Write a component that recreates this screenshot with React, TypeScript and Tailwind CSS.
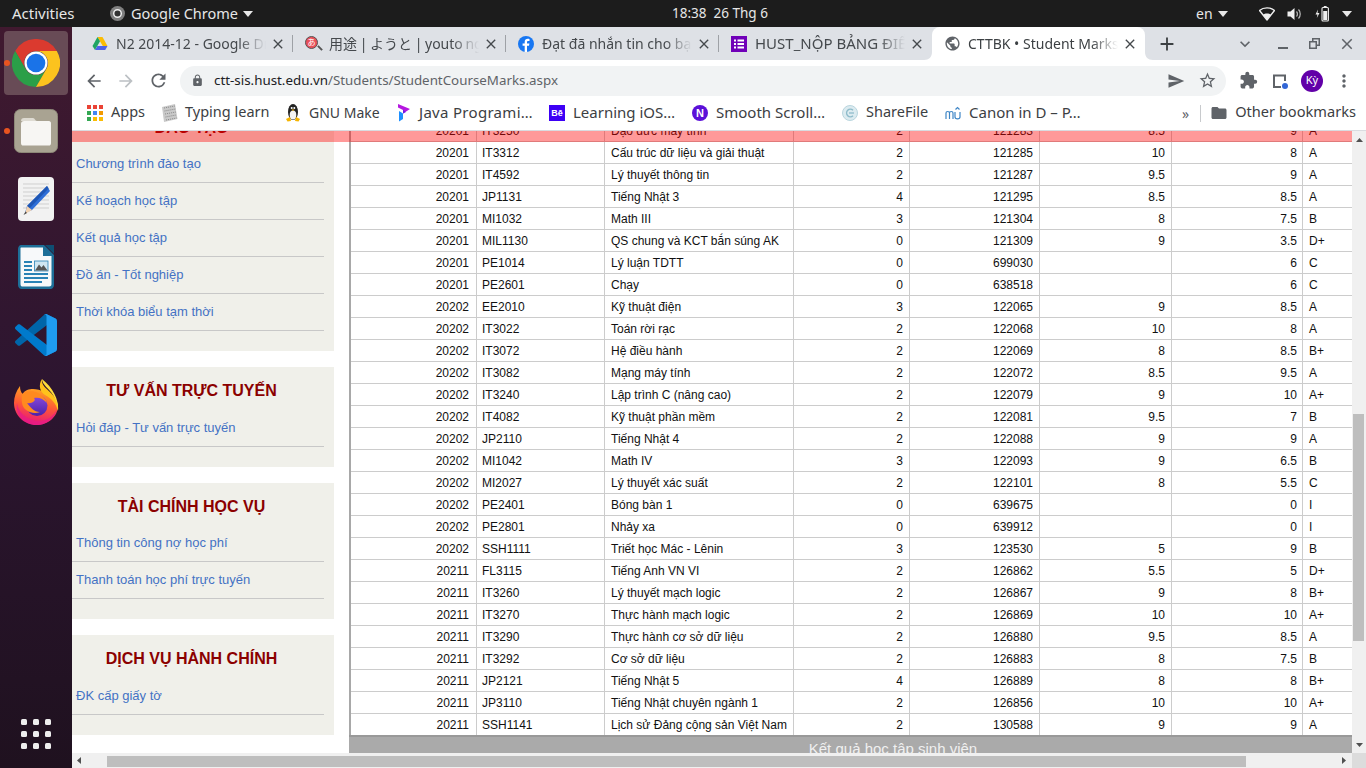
import React from "react";
import { MdArrowBack, MdArrowForward, MdRefresh, MdClose, MdAdd, MdExpandMore, MdMoreVert, MdLock, MdSend, MdStarBorder, MdExtension, MdFolder, MdPublic } from "react-icons/md";

const rows: string[][] = [
  ["20201", "IT3250", "Đạo đức máy tính", "2", "121283", "8.5", "9", "A"],
  ["20201", "IT3312", "Cấu trúc dữ liệu và giải thuật", "2", "121285", "10", "8", "A"],
  ["20201", "IT4592", "Lý thuyết thông tin", "2", "121287", "9.5", "9", "A"],
  ["20201", "JP1131", "Tiếng Nhật 3", "4", "121295", "8.5", "8.5", "A"],
  ["20201", "MI1032", "Math III", "3", "121304", "8", "7.5", "B"],
  ["20201", "MIL1130", "QS chung và KCT bắn súng AK", "0", "121309", "9", "3.5", "D+"],
  ["20201", "PE1014", "Lý luận TDTT", "0", "699030", "", "6", "C"],
  ["20201", "PE2601", "Chạy", "0", "638518", "", "6", "C"],
  ["20202", "EE2010", "Kỹ thuật điện", "3", "122065", "9", "8.5", "A"],
  ["20202", "IT3022", "Toán rời rạc", "2", "122068", "10", "8", "A"],
  ["20202", "IT3072", "Hệ điều hành", "2", "122069", "8", "8.5", "B+"],
  ["20202", "IT3082", "Mạng máy tính", "2", "122072", "8.5", "9.5", "A"],
  ["20202", "IT3240", "Lập trình C (nâng cao)", "2", "122079", "9", "10", "A+"],
  ["20202", "IT4082", "Kỹ thuật phần mềm", "2", "122081", "9.5", "7", "B"],
  ["20202", "JP2110", "Tiếng Nhật 4", "2", "122088", "9", "9", "A"],
  ["20202", "MI1042", "Math IV", "3", "122093", "9", "6.5", "B"],
  ["20202", "MI2027", "Lý thuyết xác suất", "2", "122101", "8", "5.5", "C"],
  ["20202", "PE2401", "Bóng bàn 1", "0", "639675", "", "0", "I"],
  ["20202", "PE2801", "Nhảy xa", "0", "639912", "", "0", "I"],
  ["20202", "SSH1111", "Triết học Mác - Lênin", "3", "123530", "5", "9", "B"],
  ["20211", "FL3115", "Tiếng Anh VN VI", "2", "126862", "5.5", "5", "D+"],
  ["20211", "IT3260", "Lý thuyết mạch logic", "2", "126867", "9", "8", "B+"],
  ["20211", "IT3270", "Thực hành mạch logic", "2", "126869", "10", "10", "A+"],
  ["20211", "IT3290", "Thực hành cơ sở dữ liệu", "2", "126880", "9.5", "8.5", "A"],
  ["20211", "IT3292", "Cơ sở dữ liệu", "2", "126883", "8", "7.5", "B"],
  ["20211", "JP2121", "Tiếng Nhật 5", "4", "126889", "8", "8", "B+"],
  ["20211", "JP3110", "Tiếng Nhật chuyên ngành 1", "2", "126856", "10", "10", "A+"],
  ["20211", "SSH1141", "Lịch sử Đảng cộng sản Việt Nam", "2", "130588", "9", "9", "A"],
];

const colWidths = [126, 128, 189, 116, 130, 132, 131, 49];

function ChromeLogo({ size }: { size: number }) {
  return (
    <svg width={size} height={size} viewBox="0 0 48 48">
      <path d="M3.2 12A24 24 0 0 1 44.8 12L24 12A12 12 0 0 0 13.6 30Z" fill="#db3a2f" />
      <path d="M3.2 12L13.6 30A12 12 0 0 0 34.4 30L24 48A24 24 0 0 1 3.2 12Z" fill="#2b9f48" />
      <path d="M44.8 12L24 12A12 12 0 0 1 34.4 30L24 48A24 24 0 0 0 44.8 12Z" fill="#fcc31e" />
      <circle cx="24" cy="24" r="11.5" fill="#fff" />
      <circle cx="24" cy="24" r="9.3" fill="#1a73e8" />
    </svg>
  );
}

function DriveIcon() {
  return (
    <svg width="16" height="15" viewBox="0 0 16 15">
      <path d="M5.5 1H10.5L15.5 10H10.8Z" fill="#fbbc04" />
      <path d="M5.5 1L0.5 10L3 14L8 5.2Z" fill="#1fa463" />
      <path d="M3 14H13.2L15.5 10H5.4Z" fill="#4d62e8" />
    </svg>
  );
}

function JishoIcon() {
  return (
    <span className="relative flex h-[16px] w-[16px]">
      <span className="flex h-[13px] w-[13px] items-center justify-center rounded-full border border-[#555] bg-[#e9505a] text-[8px] leading-none text-white font-['Noto_Sans_CJK_JP',sans-serif]">
        あ
      </span>
      <span className="absolute bottom-[1px] right-0 h-[6px] w-[2px] -rotate-45 bg-[#555]" />
    </span>
  );
}

function FbIcon() {
  return (
    <svg width="16" height="16" viewBox="0 0 16 16">
      <circle cx="8" cy="8" r="8" fill="#1877f2" />
      <path d="M9 16V9.8H11L11.4 7.5H9V6.2C9 5.5 9.4 5 10.2 5H11.5V3C11 2.9 10.4 2.8 9.8 2.8C7.9 2.8 6.7 4 6.7 5.9V7.5H4.6V9.8H6.7V16Z" fill="#fff" />
    </svg>
  );
}

function FormsIcon() {
  return (
    <svg width="16" height="16" viewBox="0 0 16 16">
      <rect width="16" height="16" fill="#7000b8" />
      <g fill="#fff">
        <rect x="3" y="3.5" width="2" height="2" />
        <rect x="6.5" y="3.5" width="6.5" height="2" />
        <rect x="3" y="7" width="2" height="2" />
        <rect x="6.5" y="7" width="6.5" height="2" />
        <rect x="3" y="10.5" width="2" height="2" />
        <rect x="6.5" y="10.5" width="6.5" height="2" />
      </g>
    </svg>
  );
}

function AppsIcon() {
  const colors = ["#ea4335", "#ea4335", "#ea4335", "#34a853", "#4285f4", "#f29900", "#34a853", "#fbbc04", "#fbbc04"];
  return (
    <span className="grid grid-cols-[4px_4px_4px] grid-rows-[4px_4px_4px] gap-[2px]">
      {colors.map((c, i) => (
        <svg key={i} width="4" height="4" viewBox="0 0 4 4">
          <rect width="4" height="4" fill={c} />
        </svg>
      ))}
    </span>
  );
}

function TypingIcon() {
  return (
    <svg width="17" height="18" viewBox="0 0 17 18">
      <path d="M1 3L14 0L16.5 15L3 18Z" fill="#c9c9c9" />
      <g stroke="#777" strokeWidth="0.8" strokeDasharray="1 1">
        <path d="M3 4L14 2" />
        <path d="M3.5 7L14.5 5" />
        <path d="M4 10L15 8" />
        <path d="M4.5 13L15 11" />
        <path d="M5 16L15.5 14" />
      </g>
    </svg>
  );
}

function TuxIcon() {
  return (
    <svg width="16" height="18" viewBox="0 0 16 18">
      <ellipse cx="8" cy="8" rx="5" ry="8" fill="#222" />
      <ellipse cx="8" cy="11" rx="3.3" ry="4.6" fill="#f4f4f4" />
      <circle cx="6.7" cy="4" r="1" fill="#fff" />
      <circle cx="9.3" cy="4" r="1" fill="#fff" />
      <path d="M6.5 5.4H9.5L8 7Z" fill="#f5b400" />
      <path d="M1 15L5 13L6 17L2.5 17.6Z" fill="#f5b400" />
      <path d="M15 15L11 13L10 17L13.5 17.6Z" fill="#f5b400" />
    </svg>
  );
}

function JavaIcon() {
  return (
    <svg width="14" height="18" viewBox="0 0 14 18">
      <path d="M1 0L13 5L6 9.5L6 6L1 3.5Z" fill="#b517e0" />
      <path d="M2 7L6 9.5L6 15L2 17.5Z" fill="#1e90ff" />
      <path d="M6 6L9 8L6 9.5Z" fill="#6a1be0" />
    </svg>
  );
}

function BeIcon() {
  return (
    <span className="flex h-[16px] w-[16px] items-center justify-center bg-[#3d00f5] font-['Liberation_Sans',sans-serif] text-[9px] font-bold leading-none text-white">
      Bē
    </span>
  );
}

function NIcon() {
  return (
    <span className="flex h-[16px] w-[16px] items-center justify-center rounded-full bg-[#5b10d8] font-['Liberation_Sans',sans-serif] text-[11px] font-bold leading-none text-white">
      N
    </span>
  );
}

function ShareIcon() {
  return (
    <svg width="16" height="16" viewBox="0 0 16 16">
      <circle cx="8" cy="8" r="7.5" fill="#dcebf0" stroke="#b9d5de" />
      <path d="M11 5.2A3.8 3.8 0 1 0 11 10.8" fill="none" stroke="#8fbccb" strokeWidth="1.5" />
      <path d="M7 8H12" stroke="#8fbccb" strokeWidth="1.3" />
    </svg>
  );
}

function CanonIcon() {
  return (
    <svg width="16" height="14" viewBox="0 0 16 14">
      <path d="M1 13V7C1 5 4.5 5 4.5 7V13M4.5 7C4.5 5 8 5 8 7V13" fill="none" stroke="#3f86c6" strokeWidth="1.2" />
      <path d="M10 6V11C10 13.5 15 13.5 15 11V6" fill="none" stroke="#3f86c6" strokeWidth="1.2" />
      <path d="M10.5 3.5L12.5 1.5L14.5 3.5" fill="none" stroke="#3f86c6" strokeWidth="1.2" />
    </svg>
  );
}

function FilesIcon() {
  return (
    <svg width="44" height="44" viewBox="0 0 44 44">
      <rect x="0.5" y="0.5" width="43" height="43" rx="6" fill="#a9a392" stroke="#8d8878" />
      <path d="M7 12C7 10 8 9 10 9H19C21 9 21 12 23 12H7Z" fill="#dedbd2" />
      <path d="M7 15C7 13 8 12 10 12H35C36 12 37 13 37 14V34C37 36 36 36.5 35 36.5H9C8 36.5 7 36 7 34Z" fill="#f7f6f3" />
    </svg>
  );
}

function EditorIcon() {
  return (
    <svg width="36" height="44" viewBox="0 0 36 44">
      <rect width="36" height="44" rx="4" fill="#f2f2f2" />
      <g stroke="#cfcfcf" strokeWidth="1">
        <path d="M5 7H31M5 11H31M5 15H31M5 19H31M5 23H31M5 27H31M5 31H31" />
      </g>
      <path d="M29 9L32 14L14 33L7 36L9 29Z" fill="#2f6fd8" />
      <path d="M29 9L30.5 11.5L11 32L9 29Z" fill="#1f57b5" />
      <path d="M9 29L14 33L7 37Z" fill="#f2d2b0" />
      <path d="M7.6 34.5L9 36L5.5 38Z" fill="#444" />
    </svg>
  );
}

function WriterIcon() {
  return (
    <svg width="36" height="44" viewBox="0 0 36 44">
      <path d="M3 0H26L36 10V40C36 42 34.5 44 32.5 44H3.5C1.5 44 0 42 0 40V4C0 2 1.5 0 3 0Z" fill="#1d6f98" />
      <path d="M3 2.5H25V11H33.5V39C33.5 40.5 33 41.5 31 41.5H4C3 41.5 2.5 40.5 2.5 39V3Z" fill="#f7f9fa" />
      <path d="M27 0L36 9V0Z" fill="#0e4f73" />
      <g fill="#2a83b6">
        <rect x="6" y="16" width="8" height="2" />
        <rect x="6" y="20" width="8" height="2" />
        <rect x="6" y="24" width="8" height="2" />
        <rect x="6" y="28" width="24" height="2" />
        <rect x="6" y="32" width="24" height="2" />
        <rect x="6" y="36" width="18" height="2" />
      </g>
      <rect x="16.5" y="16" width="13.5" height="10" fill="#cfe6f2" stroke="#2a83b6" strokeWidth="0.8" />
      <path d="M17 25.5L21 19.5L23.5 22.5L25.5 20L29.5 25.5Z" fill="#555" />
    </svg>
  );
}

function VSCodeIcon() {
  return (
    <svg width="42" height="42" viewBox="0 0 100 100">
      <path d="M96.4614 10.7962L75.8569 0.875542C73.4719 -0.272773 70.6217 0.211611 68.75 2.08333L1.29858 63.5832C-0.515693 65.2373 -0.513607 68.0937 1.30308 69.7452L6.81272 74.754C8.29793 76.1042 10.5347 76.2036 12.1338 74.9905L93.3609 13.3699C96.086 11.3026 100 13.2462 100 16.6667V16.4275C100 14.0265 98.6246 11.8378 96.4614 10.7962Z" fill="#0065a9" />
      <path d="M96.4614 89.2038L75.8569 99.1245C73.4719 100.273 70.6217 99.7884 68.75 97.9167L1.29858 36.4169C-0.515693 34.7627 -0.513607 31.9063 1.30308 30.2548L6.81272 25.246C8.29793 23.8958 10.5347 23.7964 12.1338 25.0095L93.3609 86.6301C96.086 88.6974 100 86.7538 100 83.3334V83.5726C100 85.9735 98.6246 88.1622 96.4614 89.2038Z" fill="#007acc" />
      <path d="M75.8578 99.1263C73.4721 100.274 70.6219 99.7885 68.75 97.9166C71.0564 100.223 75 98.5895 75 95.3278V4.67213C75 1.41039 71.0564 -0.223106 68.75 2.08329C70.6219 0.211402 73.4721 -0.273666 75.8578 0.873633L96.4587 10.7807C98.6234 11.8217 100 14.0112 100 16.4132V83.5871C100 85.9891 98.6234 88.1786 96.4586 89.2196L75.8578 99.1263Z" fill="#1f9cf0" />
    </svg>
  );
}

function FirefoxIcon() {
  return (
    <svg width="46" height="46" viewBox="0 0 46 46">
      <defs>
        <linearGradient id="ffbody" x1="0.6" y1="0" x2="0.4" y2="1">
          <stop offset="0" stopColor="#ffb11f" />
          <stop offset="0.5" stopColor="#ff5a35" />
          <stop offset="1" stopColor="#e5127f" />
        </linearGradient>
        <linearGradient id="ffpurple" x1="0.5" y1="0" x2="0.5" y2="1">
          <stop offset="0" stopColor="#8c4be0" />
          <stop offset="1" stopColor="#4a22a8" />
        </linearGradient>
      </defs>
      <path d="M1 24C1 18 3 12 7 7C7 11 8 13 9.5 15C12 11 16 10 20 10C26 10 40 14 45 26C45 38 35 46 23.5 46C11 46 1 36 1 24Z" fill="url(#ffbody)" />
      <path d="M29 0C28 6 33 9 38 14C43 19 46 25 45 32C43 24 38 19 32 16C27 13 25 6 29 0Z" fill="#ffc21c" />
      <path d="M29 0C29 6 36 9 40 16C43 21 45 26 45 32C46 20 40 9 29 0Z" fill="#ffdc3c" />
      <circle cx="24" cy="26.5" r="10.5" fill="url(#ffpurple)" />
      <path d="M9 15C13 12 20 11 25 14C30 17 33 20 34 24C30 19 25 18 21 19C24 22 18 25 14 24C17 28 21 33 27 33C20 36 10 32 9 24C8.5 20 8.5 17 9 15Z" fill="#ff8a1f" />
      <path d="M4 24C5 34 15 42 26 42C34 42 41 37 44 30C42 40 33 46 23.5 46C12 46 2 36 4 24Z" fill="#e71c86" opacity="0.75" />
    </svg>
  );
}

function WifiIcon() {
  return (
    <svg width="16" height="14" viewBox="0 0 16 14">
      <path d="M0.5 3.5C4.5 0 11.5 0 15.5 3.5L8 13Z" fill="none" stroke="#eee" strokeWidth="1.4" strokeLinejoin="round" />
      <path d="M4 7.5C6 6 10 6 12 7.5L8 13Z" fill="#eee" />
    </svg>
  );
}

function VolumeIcon() {
  return (
    <svg width="15" height="14" viewBox="0 0 15 14">
      <path d="M0.5 4.5H3.5L7.5 1V13L3.5 9.5H0.5Z" fill="#eee" />
      <path d="M9.5 4.5C10.7 5.7 10.7 8.3 9.5 9.5M11.5 2.5C13.8 4.8 13.8 9.2 11.5 11.5" fill="none" stroke="#bbb" strokeWidth="1.2" />
    </svg>
  );
}

function BatteryIcon() {
  return (
    <svg width="14" height="16" viewBox="0 0 14 16">
      <path d="M3 3.5L0.5 8.5H2.5L1.8 12L4.5 7H2.5Z" fill="#eee" />
      <rect x="7" y="1.5" width="6.4" height="13.5" rx="1" fill="none" stroke="#eee" strokeWidth="1.1" />
      <rect x="8.8" y="0" width="2.8" height="1.6" fill="#eee" />
      <rect x="8.2" y="5" width="4" height="9" fill="#eee" />
    </svg>
  );
}

function Caret({ className }: { className?: string }) {
  return (
    <svg className={className} width="10" height="6" viewBox="0 0 10 6">
      <path d="M0 0H10L5 6Z" fill="#e8e8e8" />
    </svg>
  );
}

function Tab({ icon, title, active, sep, className, textSize }: { icon: React.ReactNode; title: string; active?: boolean; sep?: boolean; className?: string; textSize?: string }) {
  return (
    <div className={"relative flex h-[33px] w-[213px] shrink-0 items-center " + (active ? "rounded-t-[8px] bg-white " : "") + (className ?? "")}>
      <span className="flex w-[36px] shrink-0 justify-start pl-[12px]">{icon}</span>
      <span className={"w-[150px] shrink-0 overflow-hidden whitespace-nowrap [mask-image:linear-gradient(to_right,black_82%,transparent)] " + (textSize ?? "text-[14px] ") + (active ? " text-[#3c4043]" : " text-[#45494d]")}>
        {title}
      </span>
      <MdClose className="ml-[4px] shrink-0 text-[#45494d]" size={16} />
      {sep && <span className="absolute right-0 top-[8px] h-[17px] w-px bg-[#9ea1a6]" />}
      {active && (
        <>
          <svg className="absolute bottom-0 left-[-8px]" width="8" height="8" viewBox="0 0 8 8">
            <path d="M8 0V8H0C5 8 8 5 8 0Z" fill="#fff" />
          </svg>
          <svg className="absolute bottom-0 right-[-8px]" width="8" height="8" viewBox="0 0 8 8">
            <path d="M0 0V8H8C3 8 0 5 0 0Z" fill="#fff" />
          </svg>
        </>
      )}
    </div>
  );
}

function Bookmark({ icon, label, width, slot, text }: { icon: React.ReactNode; label: string; width: string; slot?: string; text?: string }) {
  return (
    <div className={"flex shrink-0 items-center whitespace-nowrap " + width}>
      <span className={"flex shrink-0 items-center " + (slot ?? "w-[24px]")}>{icon}</span>
      <span className={"mt-[-2px] " + (text ?? "text-[14.5px]")}>{label}</span>
    </div>
  );
}

function Section({ title, links, header }: { title: string; links: string[]; header: string }) {
  return (
    <div className="w-[262px] bg-[#f0f0ea] pb-[20px]">
      <div className={"flex items-center justify-center pr-[23px] text-[16px] font-bold text-[#8b0000] " + header}>{title}</div>
      {links.map((l) => (
        <div key={l} className="flex h-[37px] w-[252px] items-center border-b border-[#c8c8c8] pl-[4px] text-[13px] text-[#4472c4]">
          {l}
        </div>
      ))}
    </div>
  );
}

export default function App() {
  return (
    <div className="flex h-[768px] w-[1366px] flex-col overflow-hidden bg-white font-['Noto_Sans',sans-serif]">
      {/* GNOME top bar */}
      <div className="flex h-[27px] shrink-0 items-center bg-[#1c1c1c] text-[14px] text-[#e6e6e6]">
        <div className="w-[110px] pl-[12px] text-[15px]">Activities</div>
        <div className="flex w-[562px] items-center">
          <svg width="15" height="15" viewBox="0 0 15 15">
            <circle cx="7.5" cy="7.5" r="7.5" fill="#808080" />
            <circle cx="7.5" cy="7.5" r="3.8" fill="#333" stroke="#eee" strokeWidth="1.5" />
          </svg>
          <span className="ml-[6px] text-[14.5px]">Google Chrome</span>
          <Caret className="ml-[5px]" />
        </div>
        <div className="w-[524px] whitespace-pre text-[13.5px]">18:38  26 Thg 6</div>
        <div className="flex w-[63px] items-center">
          <span>en</span>
          <Caret className="ml-[5px]" />
        </div>
        <div className="flex w-[28px] justify-start">
          <WifiIcon />
        </div>
        <div className="flex w-[28px] justify-start">
          <VolumeIcon />
        </div>
        <div className="flex w-[27px] justify-start">
          <BatteryIcon />
        </div>
        <Caret />
      </div>

      <div className="flex min-h-0 flex-1">
        {/* Dock */}
        <div className="flex w-[72px] shrink-0 flex-col bg-gradient-to-b from-[#40192f] via-[#2c1530] to-[#1f111f] pt-[2px]">
          <div className="relative flex h-[68px] items-center justify-center">
            <div className="flex h-[64px] w-[64px] items-center justify-center rounded-[4px] bg-[#684b56]">
              <ChromeLogo size={48} />
            </div>
            <span className="absolute left-[4px] top-[31px] h-[6px] w-[6px] rounded-full bg-[#e95420]" />
          </div>
          <div className="relative flex h-[68px] items-center justify-center">
            <FilesIcon />
            <span className="absolute left-[4px] top-[31px] h-[6px] w-[6px] rounded-full bg-[#e95420]" />
          </div>
          <div className="flex h-[68px] items-center justify-center">
            <EditorIcon />
          </div>
          <div className="flex h-[68px] items-center justify-center">
            <WriterIcon />
          </div>
          <div className="flex h-[68px] items-center justify-center">
            <VSCodeIcon />
          </div>
          <div className="flex h-[66px] items-center justify-center pr-[1px]">
            <FirefoxIcon />
          </div>
          <div className="mt-auto mb-[19px] grid grid-cols-[6px_6px_6px] justify-center gap-[6px]">
            {Array.from({ length: 9 }).map((_, i) => (
              <span key={i} className="h-[6px] w-[6px] rounded-[1.5px] bg-[#eeeeee]" />
            ))}
          </div>
        </div>

        {/* Chrome window */}
        <div className="flex min-w-0 flex-1 flex-col">
          {/* Tab strip */}
          <div className="flex h-[33px] shrink-0 items-center bg-[#dee1e6] pl-[8px]">
            <Tab icon={<DriveIcon />} title="N2 2014-12 - Google Drive" sep />
            <Tab icon={<JishoIcon />} title="用途 | ようと | youto nghĩa là gì" sep className="font-['Noto_Sans','Noto_Sans_CJK_JP',sans-serif] [word-spacing:-1px]" />
            <Tab icon={<FbIcon />} title="Đạt đã nhắn tin cho bạn" sep />
            <Tab icon={<FormsIcon />} title="HUST_NỘP BẢNG ĐIỂM" textSize="text-[15px]" />
            <Tab icon={<MdPublic size={17} className="text-[#5f6368]" />} title="CTTBK • Student Marks" active />
            <MdAdd size={22} className="ml-[11px] text-[#3c4043]" />
            <MdExpandMore size={20} className="ml-[57px] text-[#5f6368]" />
            <svg className="ml-[23px]" width="10" height="10" viewBox="0 0 10 10">
              <rect x="0" y="8" width="10" height="2" fill="#5f6368" />
            </svg>
            <svg className="ml-[21px]" width="11" height="11" viewBox="0 0 11 11">
              <path d="M3 0H11V8H8V11H0V3H3ZM4.5 1.5V3H8V6.5H9.5V1.5ZM1.5 4.5V9.5H6.5V4.5Z" fill="#5f6368" />
            </svg>
            <MdClose size={18} className="ml-[18px] text-[#5f6368]" />
          </div>

          {/* Toolbar */}
          <div className="flex h-[36px] shrink-0 items-center bg-white pl-[12px] pt-[5px]">
            <MdArrowBack size={20} className="text-[#5f6368]" />
            <MdArrowForward size={20} className="ml-[12px] text-[#bcc0c4]" />
            <MdRefresh size={21} className="ml-[12px] text-[#5f6368]" />
            <div className="ml-[11px] flex h-[30px] w-[1046px] items-center rounded-full bg-[#f1f3f4] pl-[11px]">
              <MdLock size={13} className="text-[#5f6368]" />
              <span className="ml-[10px] whitespace-nowrap text-[13.35px] text-[#202124]">
                ctt-sis.hust.edu.vn<span className="text-[#5f6368]">/Students/StudentCourseMarks.aspx</span>
              </span>
              <MdSend size={18} className="ml-auto text-[#5f6368]" />
              <MdStarBorder size={19} className="ml-[13px] mr-[9px] text-[#5f6368]" />
            </div>
            <MdExtension size={19} className="ml-[13px] text-[#5f6368]" />
            <svg className="ml-[14px]" width="16" height="16" viewBox="0 0 16 16">
              <path d="M1 1.5H14V8H12V3.5H3V13H9V15H1Z" fill="#5f6368" />
              <circle cx="13" cy="13" r="3" fill="#3367d6" />
            </svg>
            <span className="ml-[13px] flex h-[22px] w-[22px] items-center justify-center rounded-full bg-[#6200a8] text-[11px] text-white">Kỳ</span>
            <MdMoreVert size={20} className="ml-[11px] text-[#5f6368]" />
          </div>

          {/* Bookmarks */}
          <div className="flex h-[35px] shrink-0 items-center border-b border-[#dadce0] bg-white pl-[15px] text-[14px] text-[#3c4043]">
            <Bookmark icon={<AppsIcon />} label="Apps" width="w-[74px]" />
            <Bookmark icon={<TypingIcon />} label="Typing learn" width="w-[124px]" />
            <Bookmark icon={<TuxIcon />} label="GNU Make" width="w-[112px]" text="text-[14px]" />
            <Bookmark icon={<JavaIcon />} label="Java Programi…" width="w-[152px]" slot="w-[22px]" text="text-[15px] tracking-[0.3px]" />
            <Bookmark icon={<BeIcon />} label="Learning iOS…" width="w-[143px]" text="text-[15px]" />
            <Bookmark icon={<NIcon />} label="Smooth Scroll…" width="w-[150px]" text="text-[15px]" />
            <Bookmark icon={<ShareIcon />} label="ShareFile" width="w-[103px]" text="text-[14.5px]" />
            <Bookmark icon={<CanonIcon />} label="Canon in D – P…" width="w-[237px]" text="text-[15px]" />
            <span className="text-[#5f6368]">»</span>
            <span className="ml-[11px] h-[17px] w-px bg-[#c8cacd]" />
            <MdFolder size={18} className="ml-[9px] text-[#5f6368]" />
            <span className="ml-[7px] mt-[-2px] whitespace-nowrap text-[14.6px]">Other bookmarks</span>
          </div>

          {/* Page */}
          <div className="relative flex min-h-0 flex-1 flex-col font-['Liberation_Sans',Arial,sans-serif]">
            <div className="flex min-h-0 flex-1">
              <div className="relative flex min-w-0 flex-1 overflow-hidden">
                {/* Sidebar */}
                <div className="mt-[-27px] flex w-[262px] shrink-0 flex-col gap-[16px]">
                  <Section title="ĐÀO TẠO" header="h-[42px] pt-[6px]" links={["Chương trình đào tạo", "Kế hoạch học tập", "Kết quả học tập", "Đồ án - Tốt nghiệp", "Thời khóa biểu tạm thời"]} />
                  <Section title="TƯ VẤN TRỰC TUYẾN" header="h-[43px] pt-[5px]" links={["Hỏi đáp - Tư vấn trực tuyến"]} />
                  <Section title="TÀI CHÍNH HỌC VỤ" header="h-[42px] pt-[6px]" links={["Thông tin công nợ học phí", "Thanh toán học phí trực tuyến"]} />
                  <Section title="DỊCH VỤ HÀNH CHÍNH" header="h-[43px] pt-[5px]" links={["ĐK cấp giấy tờ"]} />
                </div>

                {/* Marks table */}
                <div className="ml-[15px] mt-[-11px] flex w-[1003px] shrink-0 flex-col border-l-2 border-[#a8a8a8]">
                  <table className="w-[1001px] table-fixed border-separate border-spacing-0 text-[12px] text-[#111]">
                    <colgroup>
                      {colWidths.map((w, i) => (
                        <col key={i} style={{ width: w }} />
                      ))}
                    </colgroup>
                    <tbody>
                      {rows.map((r) => (
                        <tr key={r[1]} className="h-[22px]">
                          <td className="border-b border-r border-[#cccccc] p-0 pr-[7px] text-right">{r[0]}</td>
                          <td className="border-b border-r border-[#cccccc] p-0 pl-[5px]">{r[1]}</td>
                          <td className="whitespace-nowrap border-b border-r border-[#cccccc] p-0 pl-[6px]">{r[2]}</td>
                          <td className="border-b border-r border-[#cccccc] p-0 pr-[6px] text-right">{r[3]}</td>
                          <td className="border-b border-r border-[#cccccc] p-0 pr-[6px] text-right">{r[4]}</td>
                          <td className="border-b border-r border-[#cccccc] p-0 pr-[6px] text-right">{r[5]}</td>
                          <td className="border-b border-r border-[#cccccc] p-0 pr-[5px] text-right">{r[6]}</td>
                          <td className="border-b border-[#cccccc] p-0 pl-[6px]">{r[7]}</td>
                        </tr>
                      ))}
                    </tbody>
                  </table>
                  <div className="ml-[-2px] mt-[-1px] h-[30px] w-[1003px] shrink-0 border-t-2 border-[#999999] bg-[#aaaaaa] pl-[85px] pt-[4px] text-center text-[15px] leading-[16px] text-[#f0f0f0]">
                    Kết quả học tập sinh viên
                  </div>
                </div>

                {/* Translucent bar lying over the top of the page */}
                <div className="absolute left-0 right-0 top-0 h-[11px] bg-[rgba(255,0,0,0.4)]" />
              </div>

              {/* Vertical scrollbar */}
              <div className="flex w-[14px] shrink-0 flex-col items-center bg-[#f0f0f0]">
                <svg className="mt-[7px]" width="7" height="4" viewBox="0 0 7 4">
                  <path d="M0 4H7L3.5 0Z" fill="#505050" />
                </svg>
                <div className="ml-[-1px] mt-[272px] h-[227px] w-[11px] bg-[#bebebe]" />
                <svg className="mt-[102px]" width="7" height="4" viewBox="0 0 7 4">
                  <path d="M0 0H7L3.5 4Z" fill="#505050" />
                </svg>
              </div>
            </div>

            {/* Horizontal scrollbar */}
            <div className="flex h-[15px] shrink-0 items-center bg-[#f0f0f0]">
              <svg className="ml-[5px]" width="4" height="7" viewBox="0 0 4 7">
                <path d="M4 0V7L0 3.5Z" fill="#505050" />
              </svg>
              <div className="ml-[26px] mt-[2px] h-[11px] w-[1139px] bg-[#bebebe]" />
              <svg className="ml-[96px]" width="4" height="7" viewBox="0 0 4 7">
                <path d="M0 0V7L4 3.5Z" fill="#505050" />
              </svg>
              <div className="ml-[6px] h-[15px] w-[14px] bg-[#dcdcdc]" />
            </div>
          </div>
        </div>
      </div>
    </div>
  );
}
